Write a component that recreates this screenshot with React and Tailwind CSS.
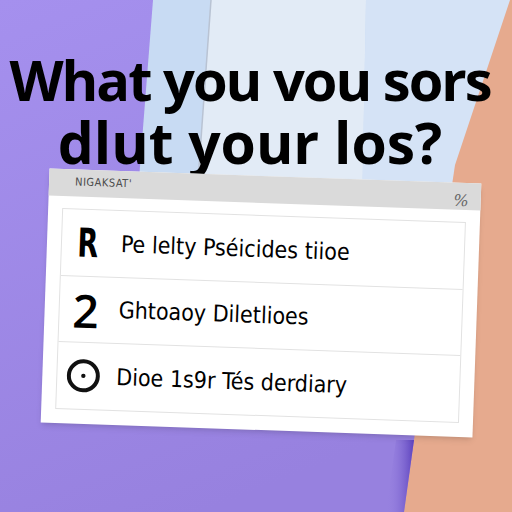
import React from "react";

const rows = [
  { key: "r", mark: "R", text: "Pe lelty Pséicides tiioe" },
  { key: "2", mark: "2", text: "Ghtoaoy Diletlioes" },
  { key: "c", mark: null, text: "Dioe 1s9r Tés derdiary" },
];

const Backdrop = () => (
  <svg className="absolute inset-0 w-full h-full" viewBox="0 0 512 512" preserveAspectRatio="none">
    <defs>
      <linearGradient id="purp" x1="0" y1="0" x2="0.4" y2="1">
        <stop offset="0" stopColor="#a590ee" />
        <stop offset="1" stopColor="#9781df" />
      </linearGradient>
      <linearGradient id="edge" x1="0" y1="0" x2="1" y2="0">
        <stop offset="0" stopColor="#9a84e2" stopOpacity="0" />
        <stop offset="1" stopColor="#5c42bd" />
      </linearGradient>
    </defs>
    <rect width="512" height="512" fill="url(#purp)" />
    <polygon points="153,0 512,0 512,320 128,320" fill="#c8dbf3" />
    <polygon points="211,0 366,0 360,320 188,320" fill="#e2ebf6" />
    <polygon points="366,0 512,0 512,320 360,320" fill="#d5e3f6" />
    <line x1="211" y1="0" x2="188" y2="320" stroke="#b9c3d3" strokeWidth="1.5" />
    <polygon points="510,0 512,0 512,512 404,512 414,440 455,165" fill="#e6aa8e" />
    <polygon points="396,440 414,440 404,512 386,512" fill="url(#edge)" />
  </svg>
);

const Mark = ({ mark }) => {
  if (mark === "R") {
    return <span className="text-[40px] leading-none font-bold text-black scale-x-75 inline-block" style={{ fontFamily: '"DejaVu Sans Condensed", "DejaVu Sans", sans-serif' }}>R</span>;
  }
  if (mark === "2") {
    return <span className="text-[46px] leading-none font-semibold text-black" style={{ fontFamily: '"Open Sans", sans-serif' }}>2</span>;
  }
  return (
    <svg width="34" height="34" viewBox="0 0 34 34">
      <circle cx="17" cy="17" r="14.5" fill="none" stroke="#111" strokeWidth="4" />
      <circle cx="17" cy="17" r="2.2" fill="#111" />
    </svg>
  );
};

export default function App() {
  return (
    <div className="relative w-[512px] h-[512px] overflow-hidden">
      <Backdrop />
      <div className="relative flex flex-col items-center">
        <h1
          className="mt-[48px] mr-[12px] font-bold text-black text-center flex flex-col items-center"
          style={{ fontFamily: '"Open Sans", sans-serif' }}
        >
          <span className="text-[56px] leading-[63px] tracking-[-2px]">What you vou sors</span>
          <span className="text-[57px] leading-[63px] tracking-[0px]">dlut your los?</span>
        </h1>
        <div className="self-start ml-[45px] mt-[2px] w-[432px] h-[254px] bg-white rotate-[2deg] shadow-md flex flex-col">
          <div className="h-[27px] bg-[#dadada] flex items-center justify-between pl-[26px] pr-[12px]">
            <span className="text-[11px] text-[#4a4a4a] tracking-[0.5px]" style={{ fontFamily: '"DejaVu Sans Condensed", sans-serif' }}>
              NIGAKSAT'
            </span>
            <span className="text-[16px] italic text-[#666] mt-[8px]" style={{ fontFamily: '"DejaVu Serif", serif' }}>
              %
            </span>
          </div>
          <div className="flex-1 px-[14px] pt-[12px] pb-[14px]">
            <div className="border border-[#e2e2e2] h-full flex flex-col">
              {rows.map((r, i) => (
                <div key={r.key} className={`flex-1 flex items-center ${i < 2 ? "border-b border-[#e2e2e2]" : ""}`}>
                  <div className="w-[52px] flex justify-center">
                    <Mark mark={r.mark} />
                  </div>
                  <span
                    className="ml-[7px] text-[23px] text-black"
                    style={{ fontFamily: '"DejaVu Sans Condensed", "DejaVu Sans", sans-serif' }}
                  >
                    {r.text}
                  </span>
                </div>
              ))}
            </div>
          </div>
        </div>
      </div>
    </div>
  );
}
